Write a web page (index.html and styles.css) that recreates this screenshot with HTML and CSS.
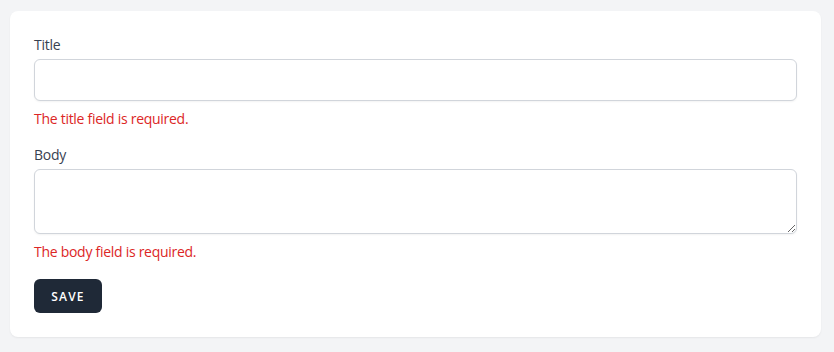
FILE: index.html
```html
<!DOCTYPE html>
<html lang="en">
<head>
<meta charset="utf-8">
<link rel="stylesheet" href="styles.css">
</head>
<body>
<div class="page">
  <form class="card">
    <div class="field">
      <label class="label" for="title">Title</label>
      <input class="input" id="title" type="text">
      <p class="error">The title field is required.</p>
    </div>
    <div class="field field-body">
      <label class="label" for="body">Body</label>
      <textarea class="input textarea" id="body"></textarea>
      <p class="error">The body field is required.</p>
    </div>
    <div class="actions">
      <button class="btn" type="button">Save</button>
    </div>
  </form>
</div>
</body>
</html>
```
FILE: styles.css
```css
html, body {
  margin: 0;
  padding: 0;
  background: #f3f4f6;
}
body {
  font-family: "Open Sans", "Noto Sans", sans-serif;
  font-size: 14px;
  line-height: 20px;
}
.page {
  padding: 11px 13px 15px 10px;
}
.card {
  background: #ffffff;
  border-radius: 8px;
  box-shadow: 0 1px 2px rgba(0,0,0,0.06);
  padding: 24px;
  display: flex;
  flex-direction: column;
}
.field {
  display: flex;
  flex-direction: column;
}
.field-body {
  margin-top: 16px;
}
.label {
  color: #374151;
  font-size: 14px;
  line-height: 20px;
}
.input {
  margin-top: 4px;
  box-sizing: border-box;
  width: 100%;
  height: 42px;
  border: 1px solid #d1d5db;
  border-radius: 6px;
  box-shadow: 0 1px 2px rgba(0,0,0,0.05);
  padding: 10px 12px;
  font: inherit;
  outline: none;
  background: #fff;
}
.textarea {
  height: 65px;
  display: block;
  resize: vertical;
}
.error {
  margin: 8px 0 0 0;
  color: #dc2626;
  font-size: 14px;
  line-height: 20px;
  letter-spacing: -0.02em;
}
.label, .error {
  letter-spacing: -0.02em;
}
.actions {
  margin-top: 17px;
  display: flex;
}
.btn {
  background: #1f2937;
  color: #ffffff;
  border: none;
  border-radius: 6px;
  height: 34px;
  width: 68px;
  padding: 0;
  font-family: inherit;
  font-size: 12px;
  font-weight: 600;
  letter-spacing: 0.1em;
  text-transform: uppercase;
  cursor: pointer;
}
```
